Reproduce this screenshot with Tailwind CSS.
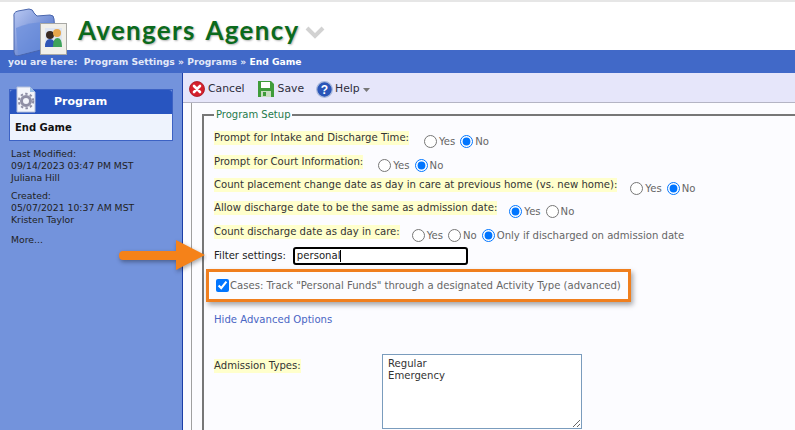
<!DOCTYPE html>
<html lang="en">
<head>
    <meta charset="UTF-8">
    <title>Avengers Agency</title>
    <script src="https://cdn.jsdelivr.net/npm/@tailwindcss/browser@4"></script>
</head>
<body class="w-[795px] h-[430px] overflow-hidden bg-white font-['DejaVu_Sans',sans-serif] text-[10.1px] text-[#333]">
<div class="relative h-[430px] overflow-hidden">
    <!-- Header -->
    <div class="h-[50px] border-t-2 border-[#e6e6e6] pl-[78px] flex items-start">
        <span class="mt-[12px] text-[26px] leading-[32px] font-bold tracking-[1.3px] [word-spacing:3px] text-[#0b6a1c] font-['Lato',sans-serif] [text-shadow:1px_1px_2px_rgba(0,0,0,0.3)]">Avengers Agency</span>
        <svg class="absolute left-[305px] top-[26px]" width="20" height="13" viewBox="0 0 20 13"><path d="M2 2l8 8 8-8" fill="none" stroke="#d2d2d2" stroke-width="4"/></svg>
    </div>

    <!-- Folder logo -->
    <svg class="absolute left-[12px] top-[8px]" width="56" height="48" viewBox="0 0 56 48">
        <defs>
            <linearGradient id="fold" x1="0" y1="0" x2="1" y2="1"><stop offset="0" stop-color="#b9c8f2"/><stop offset="1" stop-color="#3d63c0"/></linearGradient>
        </defs>
        <path d="M2 9Q1 4 6 3L17 1Q21 1 22 5L25 8L38 7Q42 7 42 11L44 38L5 48Q2 48 2 44Z" fill="url(#fold)" stroke="#4a66ad"/>
        <path d="M4 20Q18 13 41 14L43 38L6 47Z" fill="#6a8ddc" opacity=".7"/>
        <rect x="28.500" y="15.500" width="26" height="31" fill="#f1f0ea" stroke="#a9a9a5"/>
        <rect x="33" y="20" width="17" height="19" fill="#dfe6f2"/>
        <circle cx="38" cy="27" r="4" fill="#3a2a20"/>
        <circle cx="45" cy="25" r="4" fill="#e6a54a"/>
        <path d="M33 39q0-8 5-8t5 8z" fill="#2f55b5"/>
        <path d="M41 39q0-9 4.500-9t4.500 9z" fill="#3fa25a"/>
    </svg>

    <!-- Breadcrumb -->
    <div class="h-[23px] bg-[#4169c8] pl-[8px] flex items-center text-[9.2px] font-bold text-[#e2e8f8] whitespace-pre">
        <span>you are here:  Program Settings » Programs » </span><span class="text-white">End Game</span>
    </div>

    <div class="flex h-[357px]">
        <!-- Sidebar -->
        <aside class="w-[183px] shrink-0 bg-[#7393dc] border-r border-[#1c3fa8] pl-[9px] pt-[16px] text-[#222]">
            <div class="relative w-[164px] border border-[#3c62c4]">
                <div class="h-[24px] bg-[#2855c0] flex items-center pl-[44px] font-bold text-[11px] text-white rounded-t-[3px]">Program</div>
                <div class="h-[26px] bg-[#eef3fd] flex items-center pl-[5px] font-bold text-[10px] text-[#111]">End Game</div>
                <svg class="absolute left-[6px] top-[-4px]" width="20" height="27" viewBox="0 0 20 27">
                    <path d="M1 1h13l5 5v20H1z" fill="#f3f5fb" stroke="#b5c0dc"/>
                    <path d="M14 1v5h5z" fill="#9cc0e6"/>
                    <circle cx="10" cy="15" r="4.500" fill="none" stroke="#8f8fa5" stroke-width="3"/>
                    <circle cx="10" cy="15" r="7.200" fill="none" stroke="#8f8fa5" stroke-width="2" stroke-dasharray="2.4 2.3"/>
                </svg>
            </div>
            <div class="mt-[7px] pl-[2px] text-[9.3px] leading-[12px]">
                <p>Last Modified:<br>09/14/2023 03:47 PM MST<br>Juliana Hill</p>
                <p class="mt-[6px]">Created:<br>05/07/2021 10:37 AM MST<br>Kristen Taylor</p>
                <p class="mt-[8px]">More...</p>
            </div>
        </aside>

        <!-- Main -->
        <main class="flex-1 bg-[#fcfcff]">
            <div class="h-[30px] bg-[#e6e6fa] border-b border-[#b4b4c4] pl-[6px] pt-[3px] flex items-center text-[10.8px] text-[#2d2d3c]">
                <svg width="16" height="16" viewBox="0 0 16 16"><circle cx="8" cy="8" r="7.5" fill="#d5202c" stroke="#a3131d" stroke-width=".8"/><path d="M5 5l6 6M11 5l-6 6" stroke="#fff" stroke-width="2.6" stroke-linecap="round"/></svg>
                <span class="ml-[3px]">Cancel</span>
                <svg class="ml-[13px]" width="16" height="16" viewBox="0 0 16 16"><path d="M0 0h13l3 3v13H0z" fill="#3f9c3a"/><rect x="3" y="1" width="9" height="6" fill="#fff"/><rect x="3" y="10" width="10" height="6" fill="#c8dcc0"/><rect x="5" y="11" width="3" height="4" fill="#3f9c3a"/></svg>
                <span class="ml-[4px]">Save</span>
                <svg class="ml-[12px]" width="17" height="17" viewBox="0 0 17 17"><circle cx="8.500" cy="8.500" r="7.800" fill="#2a55b8" stroke="#a9b9dc" stroke-width="1.200"/><text x="8.500" y="13" text-anchor="middle" font-size="12" font-weight="700" font-family="Liberation Sans" fill="#fff">?</text></svg>
                <span class="ml-[2px]">Help</span>
                <svg class="ml-[3px] mt-[2px]" width="7" height="4" viewBox="0 0 7 4"><path d="M0 0h7L3.500 4z" fill="#777"/></svg>
            </div>

            <div class="ml-[8px] border-l border-[#a0a0a0] pl-[10px] pt-[5px] h-[327px]">
                <fieldset class="border-2 border-b-0 border-r-0 border-[#777] pl-[10px] h-[330px]">
                    <legend class="px-[2px] text-[10px] leading-[13px] text-[#1f7a4c]">Program Setup</legend>

                    <div class="mt-[10px] h-[24px] flex items-start text-[#666]">
                        <span class="bg-[#ffffcc] leading-[14px] text-[#333]">Prompt for Intake and Discharge Time:</span>
                        <label class="ml-[15px] mt-[3px] flex items-center"><input type="radio" name="a" class="mr-[2px]">Yes</label>
                        <label class="ml-[5px] mt-[3px] flex items-center"><input type="radio" name="a" checked class="mr-[2px]">No</label>
                    </div>
                    <div class="h-[23px] flex items-start text-[#666]">
                        <span class="bg-[#ffffcc] leading-[14px] text-[#333]">Prompt for Court Information:</span>
                        <label class="ml-[15px] mt-[3px] flex items-center"><input type="radio" name="b" class="mr-[2px]">Yes</label>
                        <label class="ml-[5px] mt-[3px] flex items-center"><input type="radio" name="b" checked class="mr-[2px]">No</label>
                    </div>
                    <div class="h-[23px] flex items-start text-[#666]">
                        <span class="bg-[#ffffcc] leading-[14px] text-[#333]">Count placement change date as day in care at previous home (vs. new home):</span>
                        <label class="ml-[13px] mt-[3px] flex items-center"><input type="radio" name="c" class="mr-[2px]">Yes</label>
                        <label class="ml-[5px] mt-[3px] flex items-center"><input type="radio" name="c" checked class="mr-[2px]">No</label>
                    </div>
                    <div class="h-[24px] flex items-start text-[#666]">
                        <span class="bg-[#ffffcc] leading-[14px] text-[#333]">Allow discharge date to be the same as admission date:</span>
                        <label class="ml-[12px] mt-[3px] flex items-center"><input type="radio" name="d" checked class="mr-[2px]">Yes</label>
                        <label class="ml-[5px] mt-[3px] flex items-center"><input type="radio" name="d" class="mr-[2px]">No</label>
                    </div>
                    <div class="h-[19px] flex items-start text-[#666]">
                        <span class="bg-[#ffffcc] leading-[14px] text-[#333]">Count discharge date as day in care:</span>
                        <label class="ml-[12px] mt-[3px] flex items-center"><input type="radio" name="e" class="mr-[2px]">Yes</label>
                        <label class="ml-[5px] mt-[3px] flex items-center"><input type="radio" name="e" class="mr-[2px]">No</label>
                        <label class="ml-[5px] mt-[3px] flex items-center"><input type="radio" name="e" checked class="mr-[2px]">Only if discharged on admission date</label>
                    </div>

                    <div class="h-[24px] flex items-center">
                        <span class="text-[#222]">Filter settings:</span>
                        <div class="ml-[7px] w-[175px] h-[18px] border-2 border-black rounded-[3px] bg-white flex items-center pl-[2px] text-[#222]"><span>personal</span><span class="w-px h-[12px] bg-black"></span></div>
                    </div>

                    <div class="mt-[1px] -ml-[8px] w-[425px] h-[33px] border-[3px] border-[#f07f1e] shadow-[2px_3px_5px_rgba(0,0,0,0.35)] flex items-center pl-[7px] text-[#666] whitespace-nowrap">
                        <input type="checkbox" checked class="mr-[1px]">
                        <span>Cases: Track "Personal Funds" through a designated Activity Type (advanced)</span>
                    </div>

                    <div class="mt-[10px] text-[#4a66c4]">Hide Advanced Options</div>

                    <div class="mt-[29px] flex items-start">
                        <span class="bg-[#ffffcc] leading-[14px] w-fit mt-[3px]">Admission Types:</span>
                        <textarea class="absolute left-[382px] top-[354px] w-[200px] h-[75px] border border-[#7a9cbd] bg-white px-[5px] py-[3px] leading-[12px] text-[#333]">Regular
Emergency</textarea>
                    </div>
                </fieldset>
            </div>
        </main>
    </div>

    <!-- Orange arrow pointing at the filter row -->
    <svg class="absolute left-[115px] top-[236px]" width="92" height="40" viewBox="0 0 92 40">
        <path d="M8 15H61V4L90 19 61 34V24H8Q4 24 4 19.500T8 15Z" fill="#f58219" style="filter:drop-shadow(1px 2px 2px rgba(0,0,0,.35))"/>
    </svg>
</div>
</body>
</html>
